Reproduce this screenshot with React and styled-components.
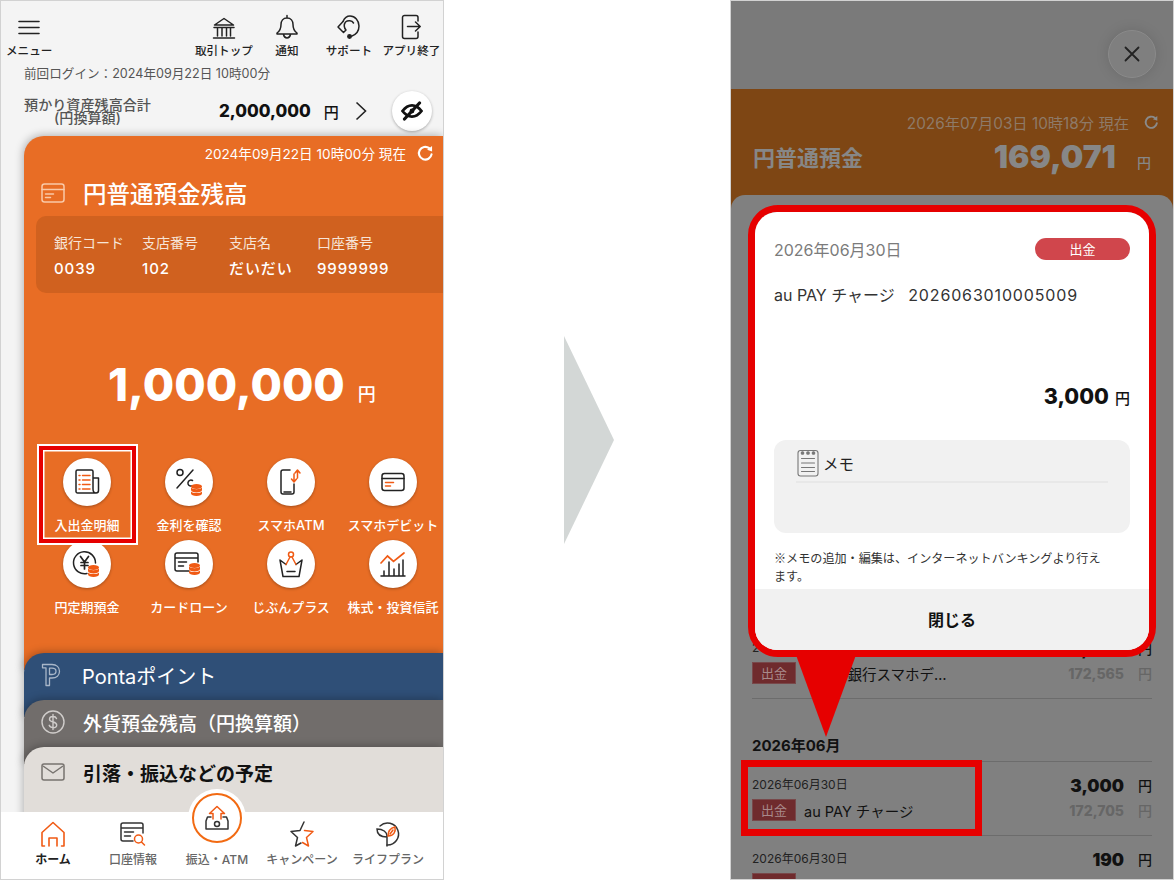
import React from "react";
import styled, { createGlobalStyle } from "styled-components";

const Global = createGlobalStyle`
  html, body { margin: 0; padding: 0; background: #fff; }
  * { box-sizing: border-box; }
  body { font-family: "Inter", "Noto Sans CJK JP", "Noto Sans", sans-serif; }
`;

const NUM = `"Inter", "Noto Sans CJK JP", sans-serif`;
const ORANGE = "#f05a14";

const Page = styled.div`
  display: flex;
  width: 1174px;
  height: 880px;
  overflow: hidden;
`;
const Phone = styled.div`
  position: relative;
  display: flex;
  flex-direction: column;
  width: 444px;
  height: 880px;
  flex: none;
  overflow: hidden;
  border: 1px solid #d2d2d2;
  background: ${(p) => p.$bg};
`;
const Middle = styled.div`
  width: 286px;
  flex: none;
  display: flex;
  align-items: center;
  justify-content: center;
  padding-left: 4px;
`;
const BigArrow = styled.div`
  width: 50px;
  height: 208px;
  background: #d3d7d6;
  clip-path: polygon(0 0, 100% 50%, 0 100%);
`;

/* left phone */
const Main = styled.div`
  flex: 1;
  min-height: 0;
  overflow: hidden;
  background: #f4f4f4;
`;
const Header = styled.header`
  display: flex;
  height: 64px;
  padding: 12px 0 0 5px;
`;
const HeaderGroup = styled.div`
  display: flex;
  margin-left: 140px;
`;
const HeaderItem = styled.div`
  width: ${(p) => p.$w || 62}px;
  display: flex;
  flex-direction: column;
  align-items: center;
  color: #222;
  font-size: 11.6px;
  font-weight: 500;
  line-height: 14px;
  white-space: nowrap;
  svg { display: block; height: 28px; margin-bottom: 3px; }
`;
const LoginLine = styled.div`
  height: 16px;
  margin-top: 1px;
  padding-left: 23px;
  color: #555;
  font-size: 12.6px;
  line-height: 16px;
  white-space: nowrap;
`;
const TotalRow = styled.div`
  display: flex;
  align-items: center;
  height: 42px;
  margin-top: 8px;
  padding-left: 23px;
`;
const TotalLabel = styled.div`
  width: 127px;
  color: #555;
  font-size: 14.1px;
  font-weight: 500;
  line-height: 13.5px;
  text-align: center;
  white-space: nowrap;
`;
const TotalValue = styled.div`
  margin-left: 68px;
  color: #111;
  font-family: ${NUM};
  font-size: 17px;
  font-weight: 800;
`;
const Yen = styled.span`
  color: ${(p) => p.$c || "#111"};
  font-size: ${(p) => p.$s || 15}px;
  font-weight: ${(p) => p.$w || 500};
  margin-left: ${(p) => p.$m || 0}px;
`;
const Chevron = styled.svg`
  margin-left: 16px;
  flex: none;
`;
const EyeButton = styled.div`
  width: 40px;
  height: 40px;
  margin-left: 25px;
  border-radius: 50%;
  background: #fff;
  box-shadow: 0 1px 3px rgba(0, 0, 0, 0.3);
  display: flex;
  align-items: center;
  justify-content: center;
  flex: none;
`;
const Stack = styled.div`
  margin: 4px 0 0 23px;
`;
const Card = styled.section`
  position: relative;
  height: ${(p) => p.$h}px;
  margin-top: ${(p) => p.$o || 0}px;
  border-radius: 20px 0 0 0;
  background: ${(p) => p.$bg};
  color: ${(p) => p.$fg || "#fff"};
  box-shadow: -1px -1px 8px rgba(0, 0, 0, 0.28);
`;
const DateRow = styled.div`
  display: flex;
  justify-content: flex-end;
  align-items: center;
  gap: 11px;
  height: 18px;
  padding: 0 9px 0 0;
  font-size: 13.6px;
  white-space: nowrap;
`;
const CardTop = styled.div`
  padding-top: 8px;
`;
const TitleRow = styled.div`
  display: flex;
  align-items: center;
  gap: ${(p) => p.$gap || 18}px;
  height: ${(p) => p.$h || 32}px;
  margin-top: ${(p) => p.$mt || 0}px;
  padding-left: 17px;
  font-size: ${(p) => p.$s || 23.5}px;
  font-weight: ${(p) => p.$w || 500};
  white-space: nowrap;
  svg { flex: none; }
`;
const InfoBox = styled.div`
  display: grid;
  grid-template-columns: 88px 87px 88px 1fr;
  height: 77px;
  margin: 7px 0 0 12px;
  padding: 18px 0 0 18px;
  border-radius: 10px 0 0 10px;
  background: #d0611f;
`;
const InfoCell = styled.div`
  display: flex;
  flex-direction: column;
  gap: 8px;
  white-space: nowrap;
`;
const InfoLabel = styled.div`
  font-size: 14px;
  line-height: 18px;
  color: #f7e5d8;
`;
const InfoValue = styled.div`
  font-size: 15px;
  line-height: 18px;
  font-weight: 500;
  letter-spacing: 0.9px;
`;
const Balance = styled.div`
  display: flex;
  align-items: baseline;
  height: 60px;
  margin-top: 62px;
  padding-left: 84px;
  line-height: 60px;
  font-family: ${NUM};
  font-size: 45.5px;
  font-weight: 800;
  white-space: nowrap;
`;
const Grid = styled.div`
  display: grid;
  grid-template-columns: repeat(4, 102px);
  row-gap: 6px;
  margin: 43px 0 0 12px;
`;
const Tile = styled.div`
  position: relative;
  display: flex;
  flex-direction: column;
  align-items: center;
  font-size: 13px;
  font-weight: 500;
  line-height: 18px;
  white-space: nowrap;
`;
const TileCircle = styled.div`
  width: 48px;
  height: 48px;
  margin-bottom: 10px;
  border-radius: 50%;
  background: #fff;
  box-shadow: 0 1px 3px rgba(0, 0, 0, 0.3);
  display: flex;
  align-items: center;
  justify-content: center;
`;
const Highlight = styled.div`
  position: absolute;
  left: 2px;
  top: -13px;
  width: 99px;
  height: 99px;
  z-index: 2;
  border: 5px solid #e60000;
  outline: 2px solid #fff;
  outline-offset: -1px;
  box-shadow: inset 0 0 0 1.5px #fff;
  pointer-events: none;
`;
const TabBar = styled.nav`
  position: relative;
  display: grid;
  grid-template-columns: 86px 74px 94px 76px 96px;
  height: 67px;
  flex: none;
  padding-left: 9px;
  background: #fff;
  z-index: 3;
`;
const Tab = styled.div`
  display: flex;
  flex-direction: column;
  align-items: center;
  padding-top: 9px;
  color: ${(p) => (p.$active ? "#222" : "#666")};
  font-size: 12px;
  font-weight: ${(p) => (p.$active ? 700 : 500)};
  line-height: 16px;
  white-space: nowrap;
  svg { display: block; height: 26px; margin-bottom: 5px; }
`;
const TabSpacer = styled.div`
  height: 26px;
  margin-bottom: 5px;
`;
const FabHalo = styled.div`
  position: absolute;
  left: 187px;
  top: -23px;
  width: 58px;
  height: 58px;
  padding: 4px;
  border-radius: 50%;
  background: #fff;
`;
const FabRing = styled.div`
  width: 50px;
  height: 50px;
  border: 2px solid #f26a12;
  border-radius: 50%;
  display: flex;
  align-items: center;
  justify-content: center;
`;

/* right phone */
const TopBar = styled.div`
  display: flex;
  justify-content: flex-end;
  height: 88px;
  flex: none;
  padding: 29px 17px 0 0;
  background: #7a7a7a;
`;
const CloseButton = styled.div`
  width: 48px;
  height: 48px;
  border-radius: 50%;
  background: #7f7f7f;
  border: 1px solid #8a8a8a;
  box-shadow: 0 0 14px rgba(0, 0, 0, 0.12);
  display: flex;
  align-items: center;
  justify-content: center;
`;
const AccountHead = styled.div`
  height: 120px;
  flex: none;
  padding: 23px 14px 0 22px;
  background: #7e4614;
`;
const AccountDate = styled.div`
  display: flex;
  justify-content: flex-end;
  align-items: center;
  gap: 15px;
  height: 20px;
  color: #8e7a68;
  font-size: 15.3px;
  white-space: nowrap;
`;
const AccountRow = styled.div`
  display: flex;
  align-items: center;
  justify-content: space-between;
  height: 48px;
  padding-right: 8px;
  color: #878787;
`;
const AccountName = styled.div`
  font-size: 22px;
  font-weight: 700;
`;
const AccountAmount = styled.div`
  font-family: ${NUM};
  font-size: 31.8px;
  font-weight: 900;
  white-space: nowrap;
`;
const Sheet = styled.div`
  flex: 1;
  min-height: 0;
  margin-top: -14px;
  padding: 429px 21px 0;
  border-radius: 14px 14px 0 0;
  background: #808080;
`;
const MonthHead = styled.div`
  height: 62px;
  padding-top: 36px;
  color: #111;
  font-size: 15px;
  font-weight: 700;
  line-height: 22px;
`;
const Row = styled.div`
  display: grid;
  grid-template-columns: 1fr auto;
  align-content: start;
  height: ${(p) => (p.$first ? 74 : 75)}px;
  padding-top: ${(p) => (p.$first ? 14 : 15)}px;
  border-top: ${(p) => (p.$first ? "1px solid #6c6c6c" : "0")};
  border-bottom: ${(p) => (p.$first ? "0" : "1px solid #6c6c6c")};
`;
const RowDate = styled.div`
  height: 23px;
  padding-top: 1px;
  color: #222;
  font-size: 12px;
  line-height: 16px;
`;
const RowAmount = styled.div`
  display: flex;
  align-items: center;
  justify-content: flex-end;
  gap: 14px;
  height: 18px;
  color: #111;
  font-family: ${NUM};
  font-size: 17.2px;
  font-weight: 900;
`;
const RowMain = styled.div`
  display: flex;
  align-items: center;
  gap: 8px;
  color: #111;
  font-size: 14.5px;
  white-space: nowrap;
`;
const DepositTag = styled.span`
  width: 44px;
  height: 22px;
  background: #6f2b2d;
  border: 1px solid #78484a;
  color: #a88a8b;
  font-size: 13px;
  line-height: 20px;
  text-align: center;
`;
const RowBalance = styled.div`
  display: flex;
  align-items: center;
  justify-content: flex-end;
  gap: 14px;
  height: 22px;
  color: #666;
  font-family: ${NUM};
  font-size: 14px;
  font-weight: 800;
`;
const Modal = styled.div`
  position: absolute;
  left: 17px;
  top: 204px;
  width: 408px;
  height: 452px;
  border: 7px solid #e60000;
  border-radius: 30px;
  z-index: 4;
`;
const ModalInner = styled.div`
  display: flex;
  flex-direction: column;
  height: 100%;
  overflow: hidden;
  border-radius: 22px;
  background: #fff;
`;
const ModalBody = styled.div`
  flex: 1;
  padding: 26px 19px 0;
`;
const ModalTop = styled.div`
  display: flex;
  align-items: center;
  justify-content: space-between;
  height: 22px;
  color: #7b7b7b;
  font-size: 16px;
`;
const Pill = styled.span`
  width: 95px;
  height: 22px;
  border-radius: 11px;
  background: #d0464c;
  color: #fff;
  font-size: 13px;
  line-height: 22px;
  text-align: center;
`;
const ModalName = styled.div`
  margin-top: 23px;
  color: #333;
  font-size: 16px;
  line-height: 24px;
  white-space: pre;
`;
const RefNumber = styled.span`
  letter-spacing: 0.85px;
`;
const ModalAmount = styled.div`
  display: flex;
  align-items: baseline;
  justify-content: flex-end;
  gap: 6px;
  height: 32px;
  margin-top: 73px;
  color: #111;
  font-family: ${NUM};
  font-size: 21.5px;
  font-weight: 800;
  line-height: 32px;
`;
const MemoBox = styled.div`
  height: 93px;
  margin-top: 28px;
  padding: 10px 22px 0;
  border-radius: 12px;
  background: #f1f1f1;
`;
const MemoHead = styled.div`
  display: flex;
  align-items: center;
  gap: 4px;
  height: 33px;
  padding: 0 0 6px 1px;
  border-bottom: 2px solid #e8e8e8;
  color: #222;
  font-size: 15.5px;
`;
const Note = styled.p`
  margin: 16px 0 0;
  padding-right: 25px;
  color: #333;
  font-family: "Noto Sans CJK JP", sans-serif;
  font-size: 12.1px;
  line-height: 18px;
`;
const ModalFooter = styled.div`
  height: 61px;
  flex: none;
  background: #f1f1f1;
  color: #111;
  font-size: 16px;
  font-weight: 700;
  line-height: 62px;
  text-align: center;
`;
const Tail = styled.div`
  position: absolute;
  left: 41px;
  top: 443px;
  width: 60px;
  height: 82px;
  background: #e60000;
  clip-path: polygon(0 0, 100% 0, 50% 100%);
`;
const RowMark = styled.div`
  position: absolute;
  left: 10px;
  top: 759px;
  width: 241px;
  height: 76px;
  border: 7px solid #e60000;
  z-index: 3;
`;

/* icons */
const Line = ({ children, w = 24, h = 24, vb = "0 0 24 24", c = "#222", sw = 1.5 }) => (
  <svg width={w} height={h} viewBox={vb} fill="none" stroke={c} strokeWidth={sw} strokeLinecap="round" strokeLinejoin="round">
    {children}
  </svg>
);
const Coins = ({ x = 0, y = 0 }) => (
  <g transform={`translate(${x} ${y})`} stroke="none">
    <ellipse cx="5.5" cy="2.5" rx="5.5" ry="2.5" fill={ORANGE} />
    <path d="M0 3.6v2.4c0 1.3 2.5 2.4 5.5 2.4s5.5-1.1 5.5-2.4V3.6c-1 1-3 1.7-5.5 1.7S1 4.6 0 3.6z" fill={ORANGE} />
    <path d="M0 7.4v2.2c0 1.3 2.5 2.4 5.5 2.4s5.5-1.1 5.5-2.4V7.4c-1 1-3 1.7-5.5 1.7S1 8.4 0 7.4z" fill={ORANGE} />
  </g>
);
const Hamburger = () => (
  <Line w={22} h={28} vb="0 0 22 28" sw={1.6}>
    <path d="M1 8.5h20M1 14.5h20M1 20.5h20" />
  </Line>
);
const Bank = () => (
  <Line w={24} h={28} vb="0 0 24 28" sw={1.5}>
    <path d="M2.5 12 12 5.5 21.5 12zM2 14.5h20M5.5 15v8M10 15v8M14.5 15v8M18.5 15v8M1.5 25h21" />
  </Line>
);
const Bell = () => (
  <Line w={24} h={28} vb="0 0 24 28" sw={1.5}>
    <path d="M12 2.5V5M12 5c-4 0-6 3-6 6.500 0 4-1 6.500-4 8.500v1h20v-1c-3-2-4-4.500-4-8.500C18 8 16 5 12 5zM8.500 21.500c.5 2.500 2 3.500 3.500 3.500s3-1 3.500-3.500" />
  </Line>
);
const Headset = () => (
  <Line w={26} h={28} vb="0 0 26 28" sw={1.5}>
    <path d="M7 8.500C8.500 5 10.500 3 14 3c5 0 9 4.500 9 10s-3.500 9-8 10.500" />
    <path d="M7 8.500 2 14l5.500 5.500 2.500-2.500c-2-2-2.500-5.500-.5-8 2.500-2 6.500-1.500 8 1" />
    <circle cx="13.500" cy="23.500" r="1.700" fill="#222" />
  </Line>
);
const ExitIcon = () => (
  <Line w={20} h={28} vb="0 0 20 28" sw={1.5}>
    <path d="M17 8V4.500a2 2 0 0 0-2-2H3.500a2 2 0 0 0-2 2v19a2 2 0 0 0 2 2H15a2 2 0 0 0 2-2V19M6.500 13.500h12.500M14.500 9l4.700 4.500-4.700 4.500" />
  </Line>
);
const EyeOff = () => (
  <svg width="22" height="20" viewBox="0 0 22 20" fill="none" stroke="#111" strokeWidth="3.200" strokeLinecap="round">
    <path d="M1.500 10C4.500 6 8 4.300 11 4.300s6.500 1.700 9.500 5.700c-3 4-6.500 5.700-9.500 5.700S4.500 14 1.500 10z" strokeWidth="2.800" />
    <circle cx="11" cy="10" r="2.400" fill="#111" stroke="none" />
    <path d="M18.500 2 3.500 18" />
  </svg>
);
const Refresh = ({ c = "#fff", s = 17 }) => (
  <svg width={s} height={s} viewBox="0 0 16 16" fill="none" stroke={c} strokeWidth="2" strokeLinecap="round">
    <path d="M13.700 8.800A6 6 0 1 1 11.500 3" />
    <path d="M14.200 1v5l-4.700-1.600z" fill={c} stroke="none" />
  </svg>
);
const CardIcon = () => (
  <svg width="24" height="20" viewBox="0 0 24 20" fill="none" stroke="#f9c9a8" strokeWidth="1.500" strokeLinecap="round">
    <rect x="1" y="1" width="22" height="18" rx="2.500" />
    <path d="M1 6.500h22M4.500 11h8M4.500 14.500h5" />
  </svg>
);
const PIcon = () => (
  <svg width="20" height="24" viewBox="0 0 20 24" fill="none" stroke="#a9b7c9" strokeWidth="1.300" strokeLinejoin="round">
    <path d="M1.500 1.500H11c4.500 0 7.500 2.800 7.500 6.800S15.500 15 11 15H8.500v7.500H5V4.800H1.500z" />
    <path d="M8.500 5.200H11c2.300 0 4 1 4 3.100s-1.700 3.200-4 3.200H8.500z" />
  </svg>
);
const DollarIcon = () => (
  <svg width="24" height="24" viewBox="0 0 24 24" fill="none" stroke="#d0cdcb" strokeWidth="1.400" strokeLinecap="round">
    <circle cx="12" cy="12" r="11" />
    <path d="M15.500 8.500C15 7 13.500 6.500 12 6.500c-2 0-3.500 1-3.500 2.700 0 3.800 7.200 1.800 7.200 5.700 0 1.800-1.600 2.700-3.700 2.700-1.800 0-3.300-.8-3.800-2.300M12 4.500v15" />
  </svg>
);
const MailIcon = () => (
  <svg width="24" height="18" viewBox="0 0 24 18" fill="none" stroke="#77736f" strokeWidth="1.500" strokeLinejoin="round">
    <rect x="1" y="1" width="22" height="16" rx="2" />
    <path d="M2 3l10 7 10-7" />
  </svg>
);
const Ledger = () => (
  <svg width="26" height="28" viewBox="0 0 26 28" fill="none" stroke="#222" strokeWidth="1.500" strokeLinecap="round" strokeLinejoin="round">
    <path d="M19 21V3.500a1.500 1.500 0 0 0-1.500-1.500h-14A1.500 1.500 0 0 0 2 3.500v20A1.500 1.500 0 0 0 3.500 25H22a2.500 2.500 0 0 0 2.500-2.500V10H19M19 21c0 2 1 4 3 4" />
    <path d="M5 7.500h1M5 12h1M5 16.500h1M5 21h1M8.500 7.500h7.500M8.500 12h7.500M8.500 16.500h7.500M8.500 21h7.500" stroke={ORANGE} />
  </svg>
);
const Percent = () => (
  <svg width="30" height="30" viewBox="0 0 30 30" fill="none" stroke="#222" strokeWidth="1.500" strokeLinecap="round">
    <circle cx="6" cy="5.500" r="3" />
    <path d="M19 3 3 21" />
    <path d="M17.500 19a3 3 0 1 1 1-5.500" />
    <Coins x={17} y={17} />
  </svg>
);
const PhoneAtm = () => (
  <svg width="24" height="30" viewBox="0 0 24 30" fill="none" stroke="#222" strokeWidth="1.500" strokeLinecap="round" strokeLinejoin="round">
    <path d="M11 3H4a2 2 0 0 0-2 2v20a2 2 0 0 0 2 2h9a2 2 0 0 0 2-2v-8M5 25h7" />
    <path d="M18.500 11V3.500M16 6l2.500-3 2.500 3M15 7v7.500M12.500 12l2.500 3 2.500-3" stroke={ORANGE} />
  </svg>
);
const Debit = () => (
  <svg width="24" height="20" viewBox="0 0 24 20" fill="none" stroke="#222" strokeWidth="1.500" strokeLinecap="round">
    <rect x="1" y="1.500" width="22" height="17" rx="2.500" />
    <path d="M1 6.500h22" />
    <path d="M4.500 10.500h8M4.500 14h5" stroke={ORANGE} />
  </svg>
);
const YenCoin = () => (
  <svg width="30" height="30" viewBox="0 0 30 30" fill="none" stroke="#222" strokeWidth="1.500" strokeLinecap="round">
    <path d="M15 24.500A11 11 0 1 1 23.500 14" />
    <path d="M8.500 7.500 12.500 13l4-5.500M12.500 13v7M9 13.500h7M9 16.500h7" strokeWidth="1.700" />
    <Coins x={16} y={16} />
  </svg>
);
const LoanCard = () => (
  <svg width="30" height="26" viewBox="0 0 30 26" fill="none" stroke="#222" strokeWidth="1.500" strokeLinecap="round">
    <path d="M15 20H3a2 2 0 0 1-2-2V4a2 2 0 0 1 2-2h19a2 2 0 0 1 2 2v7M1 7h23M4.500 11h8M4.500 15h5" />
    <Coins x={15} y={12} />
  </svg>
);
const Crown = () => (
  <svg width="26" height="28" viewBox="0 0 26 28" fill="none" stroke="#222" strokeWidth="1.500" strokeLinejoin="round" strokeLinecap="round">
    <path d="M8 14.500 2 10l3 16.500h16l3-16.500-6 4.500M9 21.500h8" />
    <path d="M8 14.500 12 7M18 14.500 14 7" stroke={ORANGE} />
    <circle cx="13" cy="4.500" r="2.500" stroke={ORANGE} />
  </svg>
);
const Chart = () => (
  <svg width="26" height="28" viewBox="0 0 26 28" fill="none" stroke="#222" strokeWidth="1.500" strokeLinecap="round">
    <path d="M1 26h24M4 25v-4M9 25V12M14 25v-6M19 25V14M23 25V10" />
    <path d="M1 13 7.500 6l6 5.500L24 3" stroke={ORANGE} strokeWidth="1.700" />
  </svg>
);
const Home = () => (
  <svg width="24" height="26" viewBox="0 0 24 26" fill="none" stroke={ORANGE} strokeWidth="1.600" strokeLinecap="round" strokeLinejoin="round">
    <path d="M1 25V11.500L12 1.500l11 10V25h-2.500M3.500 25H1M8 25v-8h8v8" />
  </svg>
);
const AccountInfo = () => (
  <svg width="26" height="26" viewBox="0 0 26 26" fill="none" stroke="#333" strokeWidth="1.500" strokeLinecap="round">
    <path d="M13 20H3a2 2 0 0 1-2-2V4a2 2 0 0 1 2-2h18a2 2 0 0 1 2 2v8M1 7h22M4.500 11h9M4.500 15h6" />
    <circle cx="18.500" cy="18" r="4" stroke={ORANGE} />
    <path d="m21.500 21 3 3" stroke={ORANGE} />
  </svg>
);
const Transfer = () => (
  <svg width="24" height="26" viewBox="0 0 24 26" fill="none" stroke="#333" strokeWidth="1.500" strokeLinecap="round" strokeLinejoin="round">
    <path d="M6 12H2.500L1 16v8h22v-8l-1.500-4H18" />
    <circle cx="12" cy="19" r="2.500" />
    <path d="M8 14V8.500H4.500L12 1.500l7.500 7H16V14" stroke={ORANGE} />
  </svg>
);
const Star = () => (
  <svg width="24" height="26" viewBox="0 0 24 26" fill="none" strokeWidth="1.500" strokeLinecap="round" strokeLinejoin="round">
    <path d="M14 1 10 9.500 1 10.500l6.500 6L5.500 25l5.500-3" stroke="#333" />
    <path d="M14.500 9.500l8.500 1-6.500 6 2 8.500-6-3.500" stroke={ORANGE} />
  </svg>
);
const Leaf = () => (
  <svg width="26" height="26" viewBox="0 0 26 26" fill="none" stroke="#333" strokeWidth="1.500" strokeLinecap="round">
    <path d="M5 5a11 11 0 1 1 7 19" />
    <path d="M12 25V15C12 11 8 8 2 8c0 5 3.500 8 10 8" />
    <path d="M13 15c0-5 3-8 7-9 1 5-1.500 9-7 9zM15 13l3-4" stroke={ORANGE} />
  </svg>
);
const Notepad = () => (
  <svg width="22" height="28" viewBox="0 0 22 28" fill="none" stroke="#777" strokeWidth="1.100" strokeLinecap="round">
    <rect x="1" y="1.500" width="20" height="25.500" rx="2.500" />
    <path d="M4.500 9.500h13M4.500 14h13M4.500 18.500h13M4.500 22.500h13" />
    <circle cx="5.500" cy="4" r="1.300" fill="#777" />
    <circle cx="11" cy="4" r="1.300" fill="#777" />
    <circle cx="16.500" cy="4" r="1.300" fill="#777" />
  </svg>
);

const tiles = [
  ["入出金明細", <Ledger />],
  ["金利を確認", <Percent />],
  ["スマホATM", <PhoneAtm />],
  ["スマホデビット", <Debit />],
  ["円定期預金", <YenCoin />],
  ["カードローン", <LoanCard />],
  ["じぶんプラス", <Crown />],
  ["株式・投資信託", <Chart />],
];
const info = [
  ["銀行コード", "0039"],
  ["支店番号", "102"],
  ["支店名", "だいだい"],
  ["口座番号", "9999999"],
];
const tabs = [
  ["ホーム", <Home />, true],
  ["口座情報", <AccountInfo />],
  ["振込・ATM", <TabSpacer />],
  ["キャンペーン", <Star />],
  ["ライフプラン", <Leaf />],
];

export default function App() {
  return (
    <Page>
      <Global />
      <Phone $bg="#f4f4f4">
        <Main>
          <Header>
            <HeaderItem $w={47}><Hamburger />メニュー</HeaderItem>
            <HeaderGroup>
              <HeaderItem $w={63}><Bank />取引トップ</HeaderItem>
              <HeaderItem $w={63}><Bell />通知</HeaderItem>
              <HeaderItem $w={61}><Headset />サポート</HeaderItem>
              <HeaderItem $w={64}><ExitIcon />アプリ終了</HeaderItem>
            </HeaderGroup>
          </Header>
          <LoginLine>前回ログイン：2024年09月22日 10時00分</LoginLine>
          <TotalRow>
            <TotalLabel>預かり資産残高合計<br />(円換算額)</TotalLabel>
            <TotalValue>2,000,000</TotalValue>
            <Yen $m={13}>円</Yen>
            <Chevron width="12" height="20" viewBox="0 0 12 20" fill="none" stroke="#222" strokeWidth="1.600">
              <path d="m1.500 1.500 9 8.500-9 8.500" />
            </Chevron>
            <EyeButton><EyeOff /></EyeButton>
          </TotalRow>
          <Stack>
            <Card $h={534} $bg="#e86d25">
              <CardTop>
                <DateRow>2024年09月22日 10時00分 現在<Refresh /></DateRow>
              </CardTop>
              <TitleRow $mt={15}><CardIcon />円普通預金残高</TitleRow>
              <InfoBox>
                {info.map(([l, v]) => (
                  <InfoCell key={l}>
                    <InfoLabel>{l}</InfoLabel>
                    <InfoValue>{v}</InfoValue>
                  </InfoCell>
                ))}
              </InfoBox>
              <Balance>1,000,000<Yen $c="#fff" $s={18} $m={13}>円</Yen></Balance>
              <Grid>
                {tiles.map(([t, icon], i) => (
                  <Tile key={t}>
                    {i === 0 && <Highlight />}
                    <TileCircle>{icon}</TileCircle>
                    {t}
                  </Tile>
                ))}
              </Grid>
            </Card>
            <Card $h={64} $o={-17} $bg="#2f4f77">
              <TitleRow $h={44} $s={20} $w={400} $gap={21}><PIcon />Pontaポイント</TitleRow>
            </Card>
            <Card $h={64} $o={-17} $bg="#716d6b">
              <TitleRow $h={44} $s={19} $gap={18}><DollarIcon />外貨預金残高（円換算額）</TitleRow>
            </Card>
            <Card $h={100} $o={-17} $bg="#e1ddd9" $fg="#111">
              <TitleRow $h={50} $s={19} $w={700} $gap={18}><MailIcon />引落・振込などの予定</TitleRow>
            </Card>
          </Stack>
        </Main>
        <TabBar>
          {tabs.map(([t, icon, active]) => (
            <Tab key={t} $active={active}>{icon}{t}</Tab>
          ))}
          <FabHalo><FabRing><Transfer /></FabRing></FabHalo>
        </TabBar>
      </Phone>

      <Middle><BigArrow /></Middle>

      <Phone $bg="#808080">
        <TopBar>
          <CloseButton>
            <svg width="16" height="16" viewBox="0 0 16 16" stroke="#222" strokeWidth="1.800" strokeLinecap="round">
              <path d="m1.500 1.500 13 13M14.500 1.500l-13 13" />
            </svg>
          </CloseButton>
        </TopBar>
        <AccountHead>
          <AccountDate>2026年07月03日 10時18分 現在<Refresh c="#8a8a8a" s={15} /></AccountDate>
          <AccountRow>
            <AccountName>円普通預金</AccountName>
            <AccountAmount>169,071<Yen $c="#878787" $s={14} $m={21}>円</Yen></AccountAmount>
          </AccountRow>
        </AccountHead>
        <Sheet>
          <Row>
            <RowDate>2026年06月30日</RowDate>
            <RowAmount>3,000<Yen $s={14} $c="#111">円</Yen></RowAmount>
            <RowMain><DepositTag>出金</DepositTag>じぶん銀行スマホデ…</RowMain>
            <RowBalance>172,565<Yen $s={14} $c="#666">円</Yen></RowBalance>
          </Row>
          <MonthHead>2026年06月</MonthHead>
          <Row $first>
            <RowDate>2026年06月30日</RowDate>
            <RowAmount>3,000<Yen $s={14} $c="#111">円</Yen></RowAmount>
            <RowMain><DepositTag>出金</DepositTag>au PAY チャージ</RowMain>
            <RowBalance>172,705<Yen $s={14} $c="#666">円</Yen></RowBalance>
          </Row>
          <Row $first>
            <RowDate>2026年06月30日</RowDate>
            <RowAmount>190<Yen $s={14} $c="#111">円</Yen></RowAmount>
            <RowMain><DepositTag /></RowMain>
          </Row>
        </Sheet>
        <RowMark />
        <Modal>
          <ModalInner>
            <ModalBody>
              <ModalTop>2026年06月30日<Pill>出金</Pill></ModalTop>
              <ModalName>au PAY チャージ   <RefNumber>2026063010005009</RefNumber></ModalName>
              <ModalAmount>3,000<Yen $s={15} $c="#111">円</Yen></ModalAmount>
              <MemoBox>
                <MemoHead><Notepad />メモ</MemoHead>
              </MemoBox>
              <Note>※メモの追加・編集は、インターネットバンキングより行えます。</Note>
            </ModalBody>
            <ModalFooter>閉じる</ModalFooter>
          </ModalInner>
          <Tail />
        </Modal>
      </Phone>
    </Page>
  );
}
